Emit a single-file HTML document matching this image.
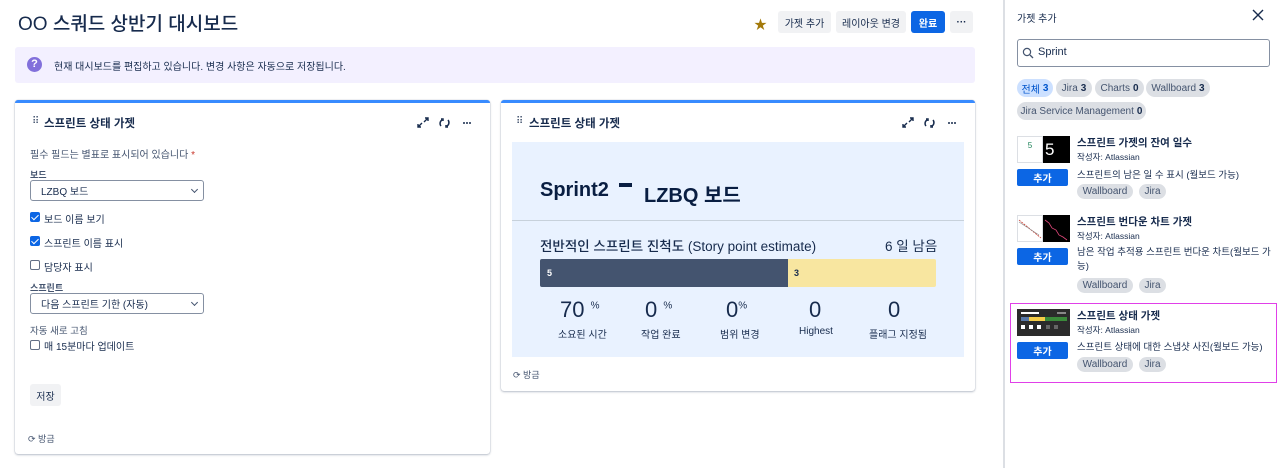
<!DOCTYPE html>
<html><head><meta charset="utf-8"><style>
*{box-sizing:border-box;margin:0;padding:0}
body{width:1280px;height:468px;overflow:hidden;background:#fff;font-family:"Liberation Sans","Noto Sans CJK KR",sans-serif;color:#172b4d;position:relative}
.a{position:absolute;white-space:nowrap}
.btn{position:absolute;background:#f1f2f4;border-radius:3px;font-size:10px;color:#172b4d;display:flex;align-items:center;justify-content:center}
.card{position:absolute;background:#fff;border-top:3px solid #388bff;border-radius:3px;box-shadow:0 1px 2px rgba(9,30,66,.25),0 0 1px rgba(9,30,66,.3)}
.cb{position:absolute;width:10px;height:10px;border-radius:2px}
.cb.on{background:#0c66e4}
.cb.on::after{content:"";position:absolute;left:3px;top:1px;width:3px;height:6px;border:solid #fff;border-width:0 1.5px 1.5px 0;transform:rotate(45deg)}
.cb.off{border:1.3px solid #626f86}
.sel{position:absolute;border:1px solid #8590a2;border-radius:3px;font-size:10px;padding-left:10px;display:flex;align-items:center}
.sel::after{content:"";position:absolute;right:6px;top:6px;width:4px;height:4px;border:solid #44546f;border-width:0 1px 1px 0;transform:rotate(45deg)}
.chip{position:absolute;height:18px;border-radius:9px;background:#dcdfe4;font-size:10px;color:#44546f;display:flex;align-items:center;justify-content:center}
.chip b{color:#172b4d;margin-left:3px}
.add{position:absolute;width:51px;height:17px;background:#0c66e4;color:#fff;font-size:10px;font-weight:bold;display:flex;align-items:center;justify-content:center;border-radius:2px}
.tag{position:absolute;height:15px;border-radius:8px;background:#dcdfe4;font-size:10px;color:#44546f;display:flex;align-items:center;justify-content:center}
</style></head><body>
<div class="a" style="left:18px;top:9px;font-size:19px;font-weight:500;color:#172b4d">OO 스쿼드 상반기 대시보드</div>
<div class="a" style="left:754px;top:14px;font-size:13px;color:#a3790a">★</div>
<div class="btn" style="left:778px;top:11px;width:53px;height:22px">가젯 추가</div>
<div class="btn" style="left:836px;top:11px;width:70px;height:22px">레이아웃 변경</div>
<div class="btn" style="left:911px;top:11px;width:34px;height:22px;background:#0c66e4;color:#fff;font-weight:bold">완료</div>
<div class="btn" style="left:950px;top:11px;width:23px;height:22px;font-weight:bold">···</div>

<div class="a" style="left:15px;top:47px;width:960px;height:36px;background:#f3f0ff;border-radius:3px"></div>
<div class="a" style="left:27px;top:57px;width:15px;height:15px;border-radius:50%;background:#8270db;color:#fff;font-size:11px;font-weight:bold;text-align:center;line-height:15px">?</div>
<div class="a" style="left:54px;top:58px;font-size:10px">현재 대시보드를 편집하고 있습니다. 변경 사항은 자동으로 저장됩니다.</div>

<div class="card" style="left:15px;top:100px;width:475px;height:354px"></div>
<div class="a" style="left:32px;top:116px;font-size:10px;color:#44546f">⠿</div>
<div class="a" style="left:44px;top:115px;font-size:11.5px;font-weight:bold">스프린트 상태 가젯</div>
<svg class="a" style="left:416px;top:116px" width="60" height="14" viewBox="0 0 60 14"><path d="M2 11l4-4M2 8v3h3M12 2l-4 4M12 5V2H9" stroke="#172b4d" stroke-width="1.4" fill="none"/><path d="M26 4a4 4 0 0 0-1 6M25 3h2v2M31 10a4 4 0 0 0 1-6M32 11h-2v-2" stroke="#172b4d" stroke-width="1.5" fill="none"/><circle cx="48" cy="7" r="1" fill="#172b4d"/><circle cx="51" cy="7" r="1" fill="#172b4d"/><circle cx="54" cy="7" r="1" fill="#172b4d"/></svg>
<div class="a" style="left:30px;top:146px;font-size:10px;color:#44546f">필수 필드는 별표로 표시되어 있습니다 <span style="color:#c9372c">*</span></div>
<div class="a" style="left:30px;top:168px;font-size:9px;font-weight:bold;color:#44546f">보드</div>
<div class="sel" style="left:30px;top:180px;width:174px;height:21px">LZBQ 보드</div>
<div class="cb on" style="left:30px;top:212px"></div><div class="a" style="left:44px;top:211px;font-size:10px">보드 이름 보기</div>
<div class="cb on" style="left:30px;top:236px"></div><div class="a" style="left:44px;top:235px;font-size:10px">스프린트 이름 표시</div>
<div class="cb off" style="left:30px;top:260px"></div><div class="a" style="left:44px;top:259px;font-size:10px">담당자 표시</div>
<div class="a" style="left:30px;top:281px;font-size:9px;font-weight:bold;color:#44546f">스프린트</div>
<div class="sel" style="left:30px;top:293px;width:174px;height:21px">다음 스프린트 기한 (자동)</div>
<div class="a" style="left:30px;top:323px;font-size:9.5px;color:#44546f">자동 새로 고침</div>
<div class="cb off" style="left:30px;top:340px"></div><div class="a" style="left:44px;top:338px;font-size:10px">매 15분마다 업데이트</div>
<div class="btn" style="left:30px;top:384px;width:31px;height:22px">저장</div>
<div class="a" style="left:28px;top:432px;font-size:9px;color:#44546f">⟳ 방금</div>

<div class="card" style="left:501px;top:100px;width:474px;height:291px"></div>
<div class="a" style="left:516px;top:116px;font-size:10px;color:#44546f">⠿</div>
<div class="a" style="left:529px;top:115px;font-size:11.5px;font-weight:bold">스프린트 상태 가젯</div>
<svg class="a" style="left:901px;top:116px" width="60" height="14" viewBox="0 0 60 14"><path d="M2 11l4-4M2 8v3h3M12 2l-4 4M12 5V2H9" stroke="#172b4d" stroke-width="1.4" fill="none"/><path d="M26 4a4 4 0 0 0-1 6M25 3h2v2M31 10a4 4 0 0 0 1-6M32 11h-2v-2" stroke="#172b4d" stroke-width="1.5" fill="none"/><circle cx="48" cy="7" r="1" fill="#172b4d"/><circle cx="51" cy="7" r="1" fill="#172b4d"/><circle cx="54" cy="7" r="1" fill="#172b4d"/></svg>
<div class="a" style="left:512px;top:142px;width:452px;height:215px;background:#e9f2ff"></div>
<div class="a" style="left:512px;top:220px;width:452px;height:1px;background:#c7d1db"></div>
<div class="a" style="left:540px;top:179px;font-size:20px;font-weight:bold;color:#091e42">Sprint2</div>
<div class="a" style="left:619px;top:183px;width:13px;height:4px;background:#091e42"></div>
<div class="a" style="left:644px;top:179px;font-size:20px;font-weight:bold;color:#091e42">LZBQ 보드</div>
<div class="a" style="left:540px;top:235px;font-size:13.5px;font-weight:500">전반적인 스프린트 진척도 (Story point estimate)</div>
<div class="a" style="left:885px;top:235px;font-size:13.5px">6 일 남음</div>
<div class="a" style="left:540px;top:259px;width:248px;height:28px;background:#44546f;border-radius:2px 0 0 2px;color:#fff;font-size:9px;font-weight:bold;padding:9px 0 0 7px">5</div>
<div class="a" style="left:788px;top:259px;width:148px;height:28px;background:#f8e6a0;border-radius:0 2px 2px 0;color:#172b4d;font-size:9px;font-weight:bold;padding:9px 0 0 6px">3</div>
<div class="a" style="left:560px;top:297px;font-size:22px">70 <sup style="font-size:10px">%</sup></div>
<div class="a" style="left:645px;top:297px;font-size:22px">0 <sup style="font-size:10px">%</sup></div>
<div class="a" style="left:726px;top:297px;font-size:22px">0<sup style="font-size:10px">%</sup></div>
<div class="a" style="left:809px;top:297px;font-size:22px">0</div>
<div class="a" style="left:888px;top:297px;font-size:22px">0</div>
<div class="a" style="left:558px;top:326px;font-size:10px">소요된 시간</div>
<div class="a" style="left:641px;top:326px;font-size:10px">작업 완료</div>
<div class="a" style="left:720px;top:326px;font-size:10px">범위 변경</div>
<div class="a" style="left:799px;top:326px;font-size:10px">Highest</div>
<div class="a" style="left:869px;top:326px;font-size:10px">플래그 지정됨</div>
<div class="a" style="left:513px;top:368px;font-size:9px;color:#44546f">⟳ 방금</div>

<div class="a" style="left:1003px;top:0;width:2px;height:468px;background:#dcdfe4"></div>
<div class="a" style="left:1017px;top:10px;font-size:10px">가젯 추가</div>
<svg class="a" style="left:1252px;top:9px" width="12" height="12"><path d="M1 1l10 10M11 1L1 11" stroke="#172b4d" stroke-width="1.4"/></svg>
<div class="a" style="left:1017px;top:39px;width:253px;height:28px;border:1px solid #8590a2;border-radius:3px"></div>
<svg class="a" style="left:1022px;top:47px" width="12" height="12"><circle cx="5" cy="5" r="3.6" stroke="#44546f" stroke-width="1.2" fill="none"/><path d="M8 8l3 3" stroke="#44546f" stroke-width="1.3"/></svg>
<div class="a" style="left:1038px;top:46px;font-size:11px">Sprint</div>
<div class="chip" style="left:1017px;top:79px;width:36px;background:#cce0ff;color:#0055cc">전체<b style="color:#0055cc">3</b></div>
<div class="chip" style="left:1056px;top:79px;width:36px">Jira<b>3</b></div>
<div class="chip" style="left:1095px;top:79px;width:49px">Charts<b>0</b></div>
<div class="chip" style="left:1146px;top:79px;width:64px">Wallboard<b>3</b></div>
<div class="chip" style="left:1017px;top:102px;width:129px">Jira Service Management<b>0</b></div>

<div class="a" style="left:1017px;top:136px;width:26px;height:27px;border:1px solid #dcdfe4;background:#fff;color:#1f845a;font-size:8px;text-align:center;padding-top:4px">5</div>
<div class="a" style="left:1043px;top:136px;width:27px;height:27px;background:#000;color:#fff;font-size:17px;padding-left:2px;line-height:27px">5</div>
<div class="add" style="left:1017px;top:169px">추가</div>
<div class="a" style="left:1077px;top:135px;font-size:10.5px;font-weight:bold">스프린트 가젯의 잔여 일수</div>
<div class="a" style="left:1077px;top:151px;font-size:8.5px">작성자: Atlassian</div>
<div class="a" style="left:1077px;top:167px;font-size:9.5px">스프린트의 남은 일 수 표시 (월보드 가능)</div>
<div class="tag" style="left:1077px;top:184px;width:56px">Wallboard</div>
<div class="tag" style="left:1139px;top:184px;width:27px">Jira</div>

<div class="a" style="left:1017px;top:215px;width:26px;height:27px;border:1px solid #dcdfe4;background:#fff"></div>
<svg class="a" style="left:1017px;top:215px" width="26" height="27"><path d="M2 5l22 18" stroke="#c9372c" stroke-width=".8" stroke-dasharray="2 1"/><path d="M2 7l20 13" stroke="#888" stroke-width=".6"/></svg>
<div class="a" style="left:1043px;top:215px;width:27px;height:27px;background:#000"></div>
<svg class="a" style="left:1043px;top:215px" width="27" height="27"><path d="M2 5l4 3 3 5 4 2 3 5 4 2 4 3" stroke="#e2487b" stroke-width=".8" fill="none"/></svg>
<div class="add" style="left:1017px;top:248px">추가</div>
<div class="a" style="left:1077px;top:214px;font-size:10.5px;font-weight:bold">스프린트 번다운 차트 가젯</div>
<div class="a" style="left:1077px;top:230px;font-size:8.5px">작성자: Atlassian</div>
<div class="a" style="left:1077px;top:246px;font-size:9.5px;white-space:normal;width:196px;line-height:14px">남은 작업 추적용 스프린트 번다운 차트(월보드 가능)</div>
<div class="tag" style="left:1077px;top:278px;width:56px">Wallboard</div>
<div class="tag" style="left:1139px;top:278px;width:27px">Jira</div>

<div class="a" style="left:1010px;top:303px;width:267px;height:80px;border:1.5px solid #e040e8"></div>
<div class="a" style="left:1017px;top:309px;width:53px;height:27px;background:#2b2b2b"></div>
<div class="a" style="left:1021px;top:312px;width:18px;height:2px;background:#fff"></div>
<div class="a" style="left:1057px;top:312px;width:9px;height:2px;background:#888"></div>
<div class="a" style="left:1021px;top:317px;width:8px;height:4px;background:#5878a8"></div>
<div class="a" style="left:1029px;top:317px;width:16px;height:4px;background:#f5cd47"></div>
<div class="a" style="left:1045px;top:317px;width:22px;height:4px;background:#3a8a3a"></div>
<div class="a" style="left:1021px;top:325px;width:4px;height:4px;background:#fff;box-shadow:8px 0 #fff,16px 0 #fff,25px 0 #666,33px 0 #666"></div>
<div class="add" style="left:1017px;top:342px">추가</div>
<div class="a" style="left:1077px;top:308px;font-size:10.5px;font-weight:bold">스프린트 상태 가젯</div>
<div class="a" style="left:1077px;top:324px;font-size:8.5px">작성자: Atlassian</div>
<div class="a" style="left:1077px;top:339px;font-size:9.5px">스프린트 상태에 대한 스냅샷 사진(월보드 가능)</div>
<div class="tag" style="left:1077px;top:357px;width:56px">Wallboard</div>
<div class="tag" style="left:1139px;top:357px;width:27px">Jira</div>
</body></html>
